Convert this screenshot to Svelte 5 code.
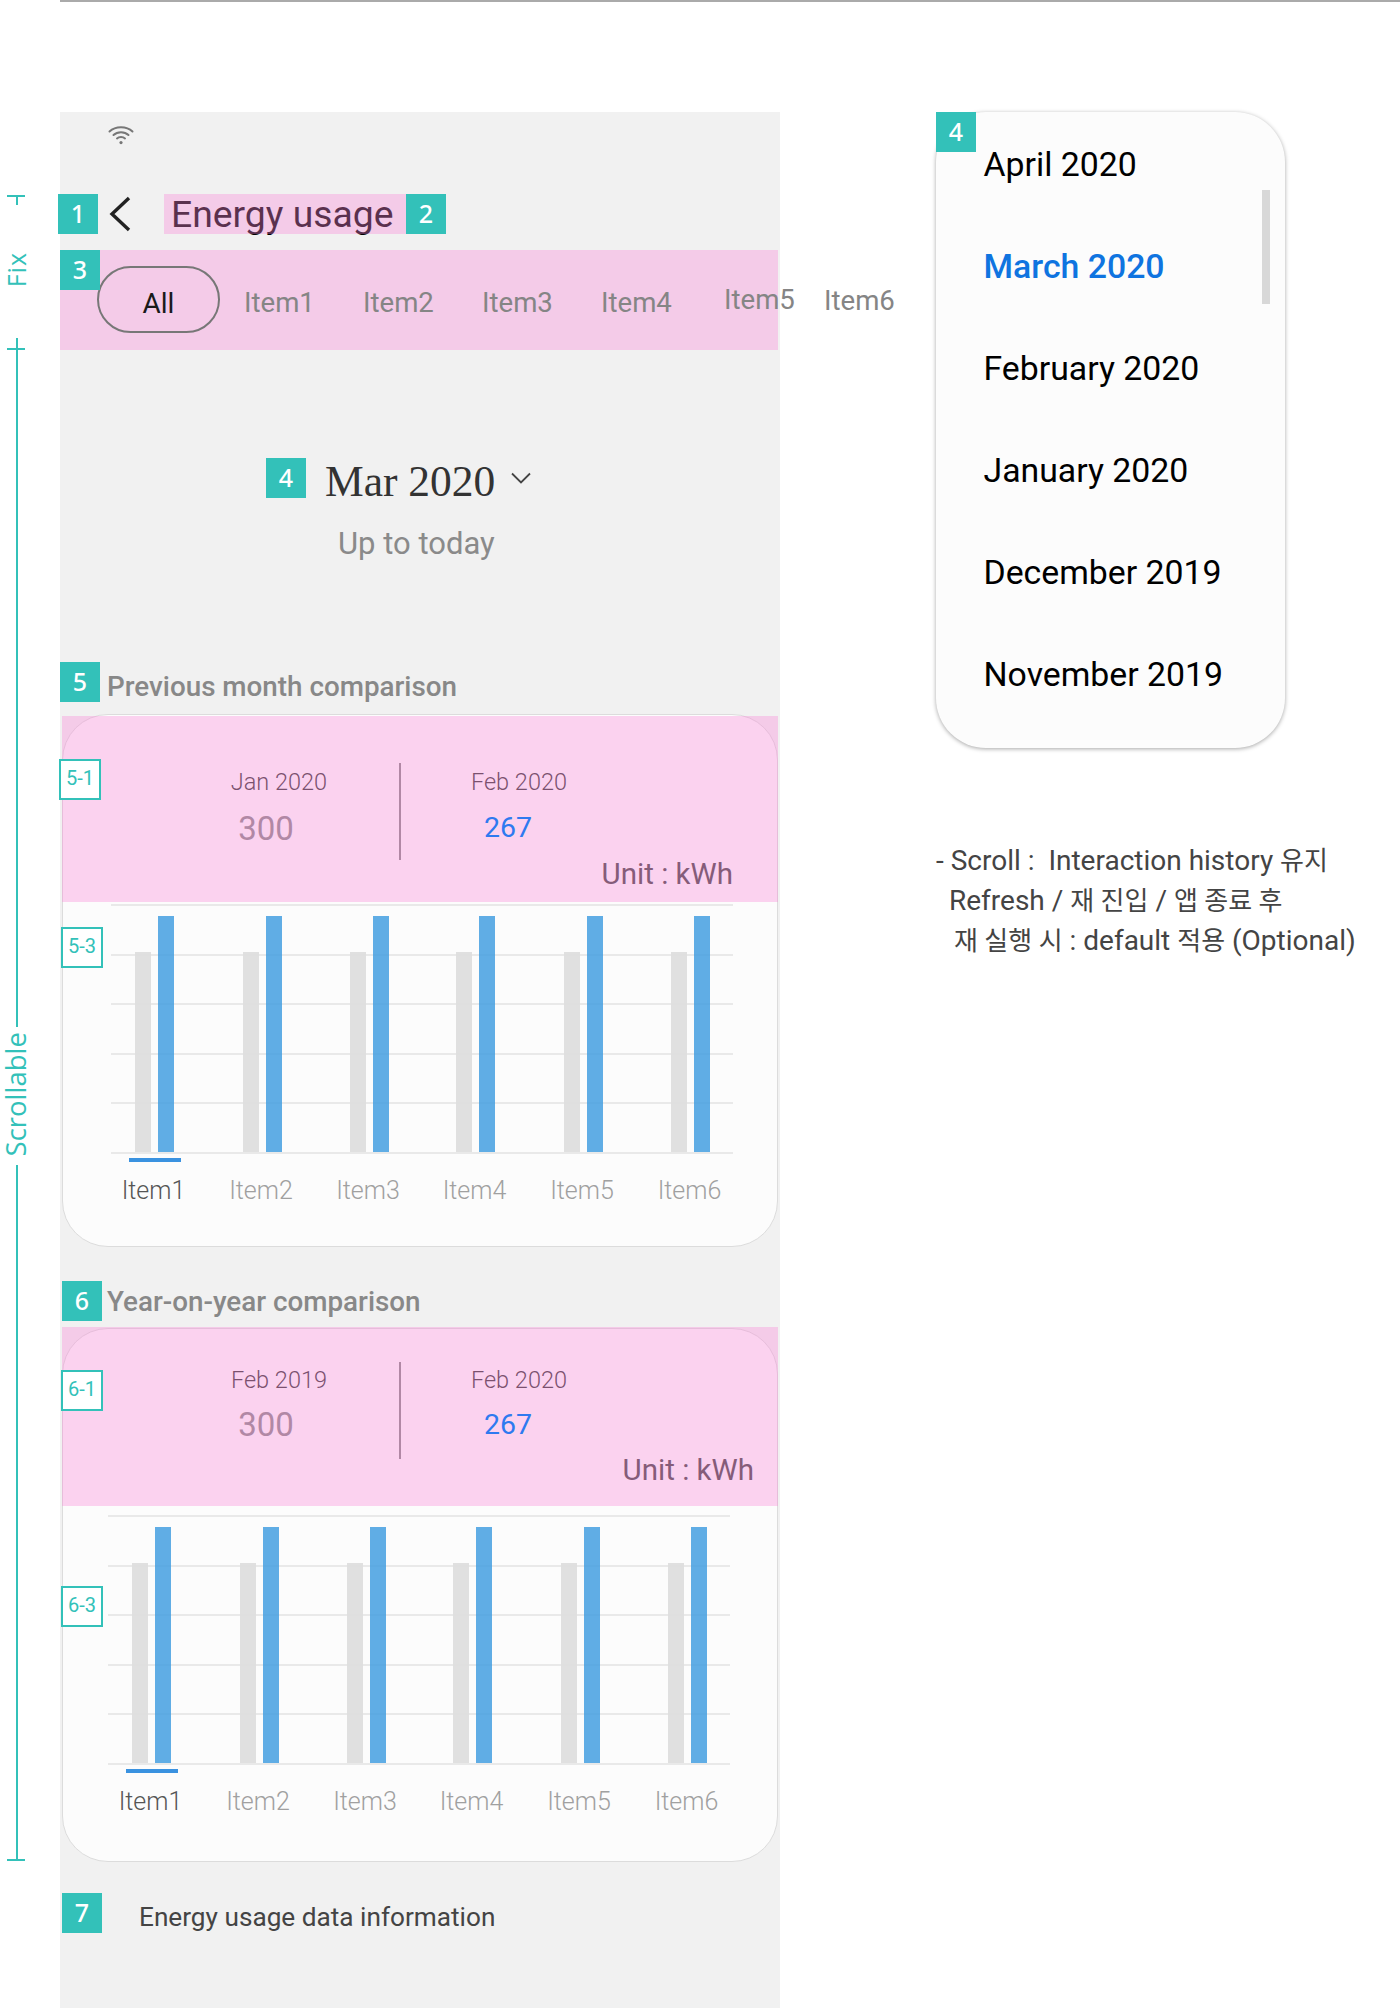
<script>
  const items = ['Item1', 'Item2', 'Item3', 'Item4', 'Item5', 'Item6'];
  const widths = [107, 108, 106, 107, 108, 107];
  const months = ['April 2020', 'March 2020', 'February 2020', 'January 2020', 'December 2019', 'November 2019'];
  const cards = [
    { id: 'c1', tag1: '5-1', tag3: '5-3', prev: 'Jan 2020' },
    { id: 'c2', tag1: '6-1', tag3: '6-3', prev: 'Feb 2019' }
  ];
</script>

{#snippet card(c)}
  <div class="card {c.id}">
    <div class="head">
      <div class="metric left">
        <div class="mlabel">{c.prev}</div>
        <div class="mvalue grey">300</div>
      </div>
      <div class="divider"></div>
      <div class="metric right">
        <div class="mlabel">Feb 2020</div>
        <div class="mvalue blue">267</div>
      </div>
      <div class="unit">Unit : kWh</div>
    </div>
    <div class="chart">
      <div class="grid">
        {#each [0, 1, 2, 3, 4, 5] as line (line)}
          <div class="gridline"></div>
        {/each}
      </div>
      <div class="cols">
        {#each items as item, i (item)}
          <div class="col" style="width: {widths[i]}px">
            <div class="bars">
              <div class="bar prevbar"></div>
              <div class="bar curbar"></div>
            </div>
            <div class="underline" class:on={i === 0}></div>
            <div class="collabel" class:on={i === 0}>{item}</div>
          </div>
        {/each}
      </div>
    </div>
    <div class="overlay headoverlay"></div>
    <div class="tag tag1">{c.tag1}</div>
    <div class="tag tag3">{c.tag3}</div>
  </div>
{/snippet}

<div class="page">
  <div class="topline"></div>
  <div class="row">
    <div class="rail">
      <div class="tee"></div>
      <div class="railtext fix">Fix</div>
      <div class="seg seg1"><div class="crossbar"></div></div>
      <div class="railtext scroll">Scrollable</div>
      <div class="seg seg2"><div class="footbar"></div></div>
    </div>

    <div class="phone">
      <div class="status">
        <svg class="wifi" viewBox="0 0 26 20" width="26" height="20" fill="none" stroke="#777" stroke-width="2" stroke-linecap="round">
          <path d="M1.5 6.5C7.5 .8 18.5 .8 24.5 6.5" />
          <path d="M5.5 10C9.5 6.3 16.5 6.3 20.5 10" />
          <path d="M9 13.4C11 11.6 15 11.6 17 13.4" />
          <circle cx="13" cy="17.6" r="1.6" fill="#777" stroke="none" />
        </svg>
      </div>

      <div class="header">
        <div class="badge b1">1</div>
        <svg class="back" viewBox="0 0 22 36" width="22" height="36" fill="none" stroke="#222" stroke-width="3.4">
          <path d="M20 2 3 18l17 16" />
        </svg>
        <div class="titlewrap">
          <span class="title">Energy usage</span>
          <div class="overlay"></div>
        </div>
        <div class="badge">2</div>
      </div>

      <div class="strip">
        <div class="overlay"></div>
        <div class="pill">All</div>
        <div class="tabs">
          {#each items as item (item)}
            <span class="tab">{item}</span>
          {/each}
        </div>
        <div class="badge b3">3</div>
      </div>

      <div class="daterow">
        <div class="badge">4</div>
        <span class="date">Mar 2020</span>
        <svg class="caret" viewBox="0 0 20 12" width="20" height="12" fill="none" stroke="#444" stroke-width="1.8">
          <path d="M1 1.5 10 10.5 19 1.5" />
        </svg>
      </div>
      <div class="today">Up to today</div>

      <div class="sectitle s5">
        <div class="badge">5</div>
        <span>Previous month comparison</span>
      </div>
      {@render card(cards[0])}

      <div class="sectitle s6">
        <div class="badge">6</div>
        <span>Year-on-year comparison</span>
      </div>
      {@render card(cards[1])}

      <div class="info">
        <div class="badge b7">7</div>
        <span>Energy usage data information</span>
      </div>
    </div>

    <div class="side">
      <div class="dropdown">
        <div class="badge ddbadge">4</div>
        {#each months as m, i (m)}
          <div class="month" class:active={i === 1}>{m}</div>
        {/each}
        <div class="scrollbar"></div>
      </div>
      <div class="notes">
        <div class="n1">- Scroll :&nbsp; Interaction history <span class="ko">유지</span></div>
        <div class="n2">Refresh / <span class="ko">재 진입</span> / <span class="ko">앱 종료 후</span></div>
        <div class="n3"><span class="ko">재 실행 시</span> : default <span class="ko">적용</span> (Optional)</div>
      </div>
    </div>
  </div>
</div>

<style>
  :global(body) { margin: 0; background: #fff; }
  .page {
    position: relative;
    width: 1400px;
    height: 2008px;
    overflow: hidden;
    background: #fff;
    font-family: Roboto, "Noto Sans CJK KR", sans-serif;
  }
  .topline { height: 2px; margin-left: 60px; background: #aaa; }
  .row { display: flex; align-items: flex-start; margin-top: 110px; }

  /* left rail */
  .rail {
    display: flex;
    flex-direction: column;
    align-items: center;
    width: 34px;
    margin-right: 26px;
    padding-top: 83px;
    color: #33c1b9;
  }
  .tee { position: relative; width: 2px; height: 10px; background: #33c1b9; }
  .tee::before { content: ""; position: absolute; left: -9px; top: 0; width: 18px; height: 2px; background: #33c1b9; }
  .railtext {
    writing-mode: vertical-rl;
    transform: rotate(180deg);
    font-family: "Open Sans", sans-serif;
    white-space: nowrap;
    line-height: 28px;
    margin-right: 2px;
  }
  .fix { margin-top: 43px; font-size: 25px; letter-spacing: 1px; padding-bottom: 4px; }
  .seg { position: relative; width: 2px; background: #33c1b9; }
  .seg1 { height: 689px; margin-top: 51px; }
  .crossbar { position: absolute; left: -9px; top: 10px; width: 18px; height: 2px; background: #33c1b9; }
  .scroll { font-size: 27.5px; padding: 8px 0 5px; }
  .seg2 { height: 696px; }
  .footbar { position: absolute; left: -9px; bottom: 0; width: 18px; height: 2px; background: #33c1b9; }

  /* phone */
  .phone {
    width: 720px;
    height: 1896px;
    flex: none;
    background: #f1f1f1;
  }
  .status { box-sizing: border-box; height: 82px; padding-top: 13px; }
  .wifi { display: block; margin-left: 48px; }

  .badge {
    flex: none;
    width: 40px;
    height: 40px;
    background: #33c1b9;
    color: #fff;
    font-family: "Noto Sans", sans-serif;
    font-size: 25px;
    line-height: 38px;
    text-align: center;
    font-weight: 500;
    position: relative;
    z-index: 2;
  }
  .overlay {
    position: absolute;
    inset: 0;
    background: rgba(249, 136, 216, 0.36);
    pointer-events: none;
  }
  .header { display: flex; align-items: center; height: 40px; }
  .b1 { margin-left: -2px; }
  .back { flex: none; margin-left: 11px; }
  .titlewrap {
    position: relative;
    width: 242px;
    height: 40px;
    margin-left: 33px;
    flex: none;
  }
  .title {
    display: block;
    padding-left: 7px;
    font-size: 37.3px;
    line-height: 40px;
    color: #000;
    white-space: nowrap;
  }

  .strip {
    position: relative;
    display: flex;
    align-items: flex-start;
    width: 718px;
    height: 100px;
    margin-top: 16px;
  }
  .b3 { position: absolute; left: 0; top: 0; }
  .pill {
    position: relative;
    box-sizing: border-box;
    flex: none;
    width: 123px;
    height: 67px;
    margin: 16px 0 0 37px;
    border: 2px solid #777;
    border-radius: 34px;
    text-align: center;
    font-size: 28px;
    line-height: 72px;
    color: #1a1a1a;
  }
  .tabs { position: relative; display: flex; gap: 47px; margin: 33px 0 0 24px; flex: none; }
  .tab { width: 72px; font-size: 27.6px; line-height: 40px; color: #858585; white-space: nowrap; }
  .tab:nth-child(5) { margin-top: -3px; margin-left: 4px; }
  .tab:nth-child(6) { margin-top: -2px; margin-left: -19px; }

  .daterow { display: flex; align-items: center; margin: 108px 0 0 206px; height: 40px; }
  .date {
    margin-left: 19px;
    padding-top: 5px;
    font-family: "Liberation Serif", serif;
    font-size: 43.5px;
    line-height: 40px;
    color: #333;
    white-space: nowrap;
  }
  .caret { margin-left: 16px; }
  .today {
    margin: 26px 0 0 278px;
    font-size: 31px;
    line-height: 40px;
    color: #8a8a8a;
    white-space: nowrap;
  }

  .sectitle {
    display: flex;
    height: 40px;
    font-size: 27.8px;
    font-weight: 500;
    line-height: 49px;
    color: #888;
    white-space: nowrap;
  }
  .sectitle span { margin-left: 7px; }
  .s5 { margin-top: 98px; }
  .s6 { margin: 34px 0 0 2px; }
  .s6 span { margin-left: 5px; line-height: 41px; }

  /* cards */
  .card {
    position: relative;
    box-sizing: border-box;
    width: 716px;
    margin-left: 2px;
    background: #fcfcfc;
    border: 1px solid #dcdcdc;
    border-radius: 46px;
  }
  .c1 { height: 533px; margin-top: 12px; }
  .c2 { height: 534px; margin-top: 7px; }
  .head { position: relative; display: flex; align-items: flex-start; }
  .c1 .head { height: 189px; }
  .c2 .head { height: 186px; }
  .metric { width: 130px; text-align: center; white-space: nowrap; flex: none; }
  .c1 .metric { padding-top: 49px; }
  .c2 .metric { padding-top: 33px; }
  .left { margin-left: 151px; }
  .right { margin-left: 53px; }
  .divider { width: 2px; height: 97px; margin-left: 55px; background: #888; flex: none; }
  .c1 .divider { margin-top: 48px; }
  .c2 .divider { margin-top: 33px; }
  .mlabel { font-size: 23.5px; line-height: 36px; color: #333; font-weight: 300; }
  .mvalue { font-size: 33px; line-height: 44px; margin-top: 7px; }
  .c2 .mvalue { margin-top: 5px; }
  .grey { color: #888; margin-left: -26px; }
  .blue { position: relative; z-index: 1; color: #2e7af0; margin-left: -22px; font-size: 28.5px; margin-top: 6px; }
  .unit {
    position: absolute;
    font-size: 29.5px;
    line-height: 36px;
    color: #444;
    white-space: nowrap;
  }
  .c1 .unit { right: 44px; top: 141px; }
  .c2 .unit { right: 23px; top: 123px; }
  .chart { position: relative; width: 622px; }
  .c1 .chart { margin-left: 48px; }
  .c2 .chart { margin-left: 45px; }
  .grid {
    position: absolute;
    left: 0;
    right: 0;
    top: 0;
    height: 250px;
    display: flex;
    flex-direction: column;
    justify-content: space-between;
  }
  .gridline { height: 2px; background: #e9e9e9; }
  .cols { position: relative; display: flex; margin-left: -10px; }
  .col { flex: none; display: flex; flex-direction: column; align-items: center; }
  .bars { display: flex; align-items: flex-end; gap: 7px; height: 248px; }
  .bar { width: 16px; }
  .prevbar { height: 200px; background: rgba(222, 222, 222, 0.95); }
  .curbar { height: 236px; background: rgba(70, 160, 225, 0.86); }
  .underline { width: 52px; height: 4px; margin-top: 6px; }
  .underline.on { background: #3a92e0; }
  .collabel {
    margin-top: 14px;
    margin-left: -2px;
    font-size: 25px;
    font-weight: 300;
    line-height: 30px;
    color: #a0a0a0;
    white-space: nowrap;
  }
  .collabel.on { color: #555; }
  .headoverlay { inset: auto; left: -1px; width: 716px; }
  .c1 .headoverlay { top: 1px; height: 186px; }
  .c2 .headoverlay { top: -2px; height: 179px; }
  .tag {
    position: absolute;
    box-sizing: border-box;
    width: 42px;
    height: 41px;
    background: #fff;
    border: 2px solid #33c1b9;
    color: #33c1b9;
    font-size: 20px;
    line-height: 35px;
    text-align: center;
    z-index: 2;
  }
  .c1 .tag1 { left: -4px; top: 44px; }
  .c1 .tag3 { left: -2px; top: 212px; }
  .c2 .tag1 { left: -2px; top: 41px; }
  .c2 .tag3 { left: -2px; top: 257px; }

  .info { display: flex; align-items: center; margin: 31px 0 0 2px; height: 40px; }
  .info span { margin-left: 37px; font-size: 26.2px; color: #444; white-space: nowrap; position: relative; top: 4px; }

  /* right side */
  .side { margin-left: 156px; flex: none; }
  .dropdown {
    position: relative;
    box-sizing: border-box;
    width: 349px;
    height: 636px;
    padding-top: 2px;
    background: #fcfcfc;
    border-radius: 50px;
    box-shadow: 0 1px 4px rgba(0, 0, 0, 0.35);
  }
  .ddbadge { position: absolute; left: 0; top: 0; }
  .month {
    height: 102px;
    padding-left: 47.5px;
    font-size: 33.8px;
    line-height: 102px;
    color: #000;
    white-space: nowrap;
  }
  .month.active { color: #0f74e0; font-weight: 500; }
  .scrollbar {
    position: absolute;
    left: 326px;
    top: 78px;
    width: 8px;
    height: 114px;
    background: #d8d8d8;
  }
  .notes {
    margin-top: 93px;
    font-size: 28px;
    line-height: 40px;
    color: #444;
    white-space: nowrap;
  }
  .ko { font-size: 26px; }
  .n2 { padding-left: 13px; }
  .n3 { padding-left: 18px; }
</style>
